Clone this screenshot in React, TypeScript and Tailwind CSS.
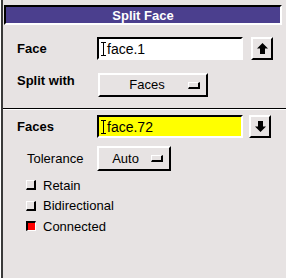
import React from "react";

const raised = "border-t-2 border-l-2 border-t-white border-l-white border-b-2 border-r-2 border-b-black border-r-black";
const sunken = "border-t-2 border-l-2 border-t-black border-l-black border-b-2 border-r-2 border-b-white border-r-white";

const Arrow = ({ down }: { down?: boolean }) => (
  <svg width="13" height="13" viewBox="0 0 13 13" className={down ? "rotate-180" : ""}>
    <polygon points="6.5,1 12,6.5 9,6.5 9,12 4,12 4,6.5 1,6.5" fill="#000" />
  </svg>
);

const ArrowButton = ({ down }: { down?: boolean }) => (
  <div className={`w-[22px] h-[23px] flex items-center justify-center bg-[#e7e3e3] ${raised}`}>
    <Arrow down={down} />
  </div>
);

const Indicator = () => (
  <div className="w-[12px] h-[7px] border-t border-l border-t-white border-l-white border-b-2 border-r-2 border-b-black border-r-black" />
);

const Check = ({ label, on }: { label: string; on?: boolean }) => (
  <div className="flex items-center h-[20.5px] pl-[23px]">
    <div
      className={
        on
          ? "w-[10px] h-[10px] bg-[#ff0000] border-t-2 border-l-2 border-t-black border-l-black border-b border-r border-b-white border-r-white"
          : "w-[10px] h-[10px] bg-[#e7e3e3] border-t border-l border-t-white border-l-white border-b-2 border-r-2 border-b-black border-r-black"
      }
    />
    <span className="ml-[7px] text-[13px] text-black">{label}</span>
  </div>
);

const Cursor = () => (
  <span className="inline-flex flex-col items-center mr-[1px] h-[14px] w-[5px]">
    <span className="w-[5px] h-[1px] bg-black" />
    <span className="w-[1px] flex-1 bg-black" />
    <span className="w-[5px] h-[1px] bg-black" />
  </span>
);

export default function App() {
  return (
    <div className="w-[286px] h-[278px] bg-[#e7e3e3] overflow-hidden font-['Liberation_Sans',Arial,sans-serif] border-l border-l-white">
      <div className="h-full border-l-2 border-l-[#3a3a3a] flex flex-col">
        {/* title */}
        <div className={`mt-[5px] ml-[1px] w-[278px] h-[20px] bg-[#4b3f8e] flex items-center justify-center ${sunken}`}>
          <span className="text-white font-bold text-[13px] leading-none">Split Face</span>
        </div>

        {/* face row */}
        <div className="flex items-center mt-[12px] h-[23px]">
          <span className="w-[94px] pl-[14px] font-bold text-[13px]">Face</span>
          <div className={`w-[146px] h-[23px] bg-white flex items-center pl-[2px] ${sunken}`}>
            <Cursor />
            <span className="text-[14px] leading-none">face.1</span>
          </div>
          <div className="ml-[8px]">
            <ArrowButton />
          </div>
        </div>

        {/* split with */}
        <div className="flex items-start mt-[13px] h-[24px]">
          <span className="w-[95px] pl-[14px] font-bold text-[13px] leading-[13px] mt-[1px]">Split with</span>
          <div className={`w-[110px] h-[24px] flex items-center ${raised}`}>
            <span className="flex-1 text-center text-[13px] pl-[6px]">Faces</span>
            <div className="mr-[6px]">
              <Indicator />
            </div>
          </div>
        </div>

        {/* separator */}
        <div className="mt-[11px] h-[2px] border-t border-t-black border-b border-b-white" />

        {/* faces row */}
        <div className="flex items-center mt-[5px] h-[23px]">
          <span className="w-[94px] pl-[14px] font-bold text-[13px]">Faces</span>
          <div className={`w-[146px] h-[23px] bg-[#ffff00] flex items-center pl-[2px] ${sunken}`}>
            <Cursor />
            <span className="text-[14px] leading-none">face.72</span>
          </div>
          <div className="ml-[6px]">
            <ArrowButton down />
          </div>
        </div>

        {/* tolerance */}
        <div className="flex items-center mt-[8px] h-[25px]">
          <span className="w-[94px] pl-[24px] text-[13px]">Tolerance</span>
          <div className={`w-[74px] h-[25px] flex items-center ${raised}`}>
            <span className="flex-1 text-center text-[13px] pl-[1px]">Auto</span>
            <div className="mr-[6px]">
              <Indicator />
            </div>
          </div>
        </div>

        <div className="mt-[4px] flex flex-col">
          <Check label="Retain" />
          <Check label="Bidirectional" />
          <Check label="Connected" on />
        </div>
      </div>
    </div>
  );
}
